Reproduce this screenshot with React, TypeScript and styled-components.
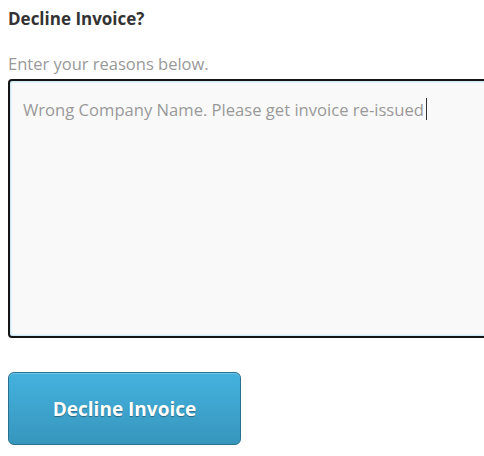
import React from "react";
import styled, { createGlobalStyle } from "styled-components";

const GlobalStyle = createGlobalStyle`
  html, body {
    margin: 0;
    padding: 0;
    background: #fff;
    overflow: hidden;
  }
  body {
    font-family: "Open Sans", "Noto Sans", sans-serif;
  }
`;

const App: React.FC = () => {
  return (
    <>
      <GlobalStyle />
      <Panel>
        <Title>Decline Invoice?</Title>
        <Label htmlFor="reasons">Enter your reasons below.</Label>
        <ReasonBox id="reasons" role="textbox" aria-multiline="true">
          Wrong Company Name. Please get invoice re-issued
          <Caret />
        </ReasonBox>
        <DeclineButton type="button">Decline Invoice</DeclineButton>
      </Panel>
    </>
  );
};

const Panel = styled.div`
  display: flex;
  flex-direction: column;
  align-items: flex-start;
  padding: 8px 0 0 8px;
  width: 484px;
  box-sizing: border-box;
`;

const Title = styled.h2`
  margin: 0;
  font-size: 17px;
  line-height: 22px;
  font-weight: 700;
  color: #333;
`;

const Label = styled.label`
  margin-top: 23px;
  font-size: 16.5px;
  line-height: 22px;
  color: #999;
`;

const ReasonBox = styled.div`
  margin-top: 4px;
  width: 490px;
  height: 259px;
  box-sizing: border-box;
  padding: 17px 13px;
  border: 2px solid #151515;
  border-radius: 4px;
  background: #f9f9f9;
  box-shadow: inset 0 0 2px 1px #bfe6f7;
  font-size: 16.6px;
  line-height: 24px;
  color: #999;
`;

const Caret = styled.span`
  display: inline-block;
  width: 1px;
  height: 22px;
  margin-left: 2px;
  vertical-align: -4px;
  background: #333;
`;

const DeclineButton = styled.button`
  margin-top: 34px;
  width: 233px;
  height: 73px;
  border: 1px solid #2a7191;
  border-radius: 6px;
  background: linear-gradient(to bottom, #44b2de 0%, #3796bd 100%);
  box-shadow: inset 0 1px 0 rgba(255, 255, 255, 0.25);
  font-family: "Open Sans", "Noto Sans", sans-serif;
  font-size: 19px;
  font-weight: 700;
  color: #fff;
  text-shadow: 0 1px 1px rgba(0, 0, 0, 0.35);
  cursor: pointer;
`;

export default App;
